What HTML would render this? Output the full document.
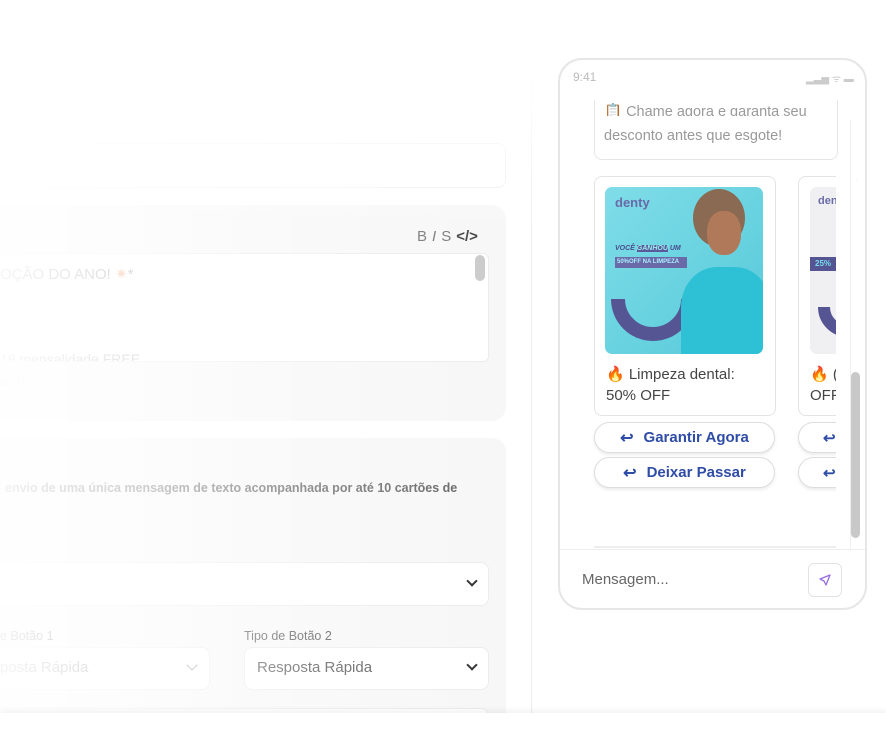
<!DOCTYPE html>
<html><head><meta charset="utf-8"><style>
*{box-sizing:border-box;margin:0;padding:0}
html,body{width:886px;height:729px;overflow:hidden}
body{background:#fff;font-family:"Liberation Sans",sans-serif;position:relative}
.a{position:absolute}
.card{background:#f7f7f7;border-radius:14px}
.box{background:#fff;border:1px solid #ececec;border-radius:8px}
.chev{position:absolute;width:8px;height:8px;border-right:2px solid #333;border-bottom:2px solid #333;transform:rotate(45deg)}
.btn{position:absolute;left:594px;width:181px;height:31px;border:1px solid #ddd;border-radius:16px;background:#fff;box-shadow:0 2px 3px rgba(0,0,0,.08);color:#2f4da6;font-weight:bold;font-size:15px;display:flex;align-items:center;justify-content:center;gap:10px}
</style></head><body>
<div class="a box" style="left:-20px;top:143px;width:526px;height:45px;border-color:#f0f0f0"></div>
<div class="a card" style="left:-20px;top:205px;width:526px;height:216px"></div>
<div class="a" style="left:417px;top:228px;font-size:15px;color:#777;letter-spacing:5px">B<i>I</i>S<b style="color:#444;letter-spacing:0">&lt;/&gt;</b></div>
<div class="a box" style="left:-20px;top:253px;width:509px;height:109px;border-radius:6px"></div>
<div class="a" style="left:475px;top:255px;width:10px;height:26px;background:#ccc;border-radius:5px"></div>
<div class="a" style="left:0;top:265px;font-size:15px;color:#888">OÇÃO DO ANO! <span style="color:#f2a070">✷</span>*</div>
<div class="a" style="left:0;top:352px;font-size:14px;line-height:14px;color:#aaa;height:9px;overflow:hidden">18 mensalidade FREE</div>
<div class="a" style="left:0;top:372px;font-size:12px;color:#ccc">is ⓘ</div>
<div class="a card" style="left:-20px;top:438px;width:526px;height:290px"></div>
<div class="a" style="left:5px;top:481px;font-size:12.5px;color:#666;font-weight:bold">envio de uma única mensagem de texto acompanhada por até 10 cartões de</div>
<div class="a box" style="left:-20px;top:562px;width:509px;height:44px"></div>
<div class="chev" style="left:468px;top:577px"></div>
<div class="a" style="left:0;top:629px;font-size:12.5px;color:#555">e Botão 1</div>
<div class="a" style="left:244px;top:629px;font-size:12.5px;color:#555">Tipo de Botão 2</div>
<div class="a box" style="left:-20px;top:647px;width:230px;height:43px"></div>
<div class="a" style="left:0;top:659px;font-size:15px;color:#888">posta Rápida</div>
<div class="chev" style="left:188px;top:661px;border-color:#999;border-width:1.5px"></div>
<div class="a box" style="left:244px;top:647px;width:245px;height:43px"></div>
<div class="a" style="left:257px;top:659px;font-size:15px;color:#555">Resposta Rápida</div>
<div class="chev" style="left:468px;top:661px"></div>
<div class="a box" style="left:-20px;top:708px;width:509px;height:40px"></div>
<div class="a" style="left:531px;top:60px;width:1px;height:655px;background:#eee"></div>
<div class="a" style="left:0;top:0;width:540px;height:729px;background:linear-gradient(90deg,rgba(255,255,255,.92) 0%,rgba(255,255,255,.7) 25%,rgba(255,255,255,.3) 55%,rgba(255,255,255,0) 90%)"></div>
<div class="a" style="left:0;top:0;width:540px;height:230px;background:linear-gradient(180deg,rgba(255,255,255,1) 30%,rgba(255,255,255,0) 100%)"></div>
<div class="a" style="left:0;top:713px;width:886px;height:16px;background:#fff;box-shadow:0 -3px 6px rgba(0,0,0,.05)"></div>
<div class="a" style="left:558px;top:58px;width:309px;height:552px;border:2px solid #e6e6e6;border-radius:24px;background:#fff;overflow:hidden">
 <div class="a" style="left:13px;top:10px;font-size:12px;color:#bbb">9:41</div>
 <div class="a" style="left:246px;top:11px;font-size:10px;color:#ccc">▂▃▅ ᯤ ▬</div>
 <div class="a" style="left:34px;top:40px;width:244px;height:60px;border:1px solid #e6e6e6;border-top:none;border-radius:0 0 8px 8px"></div>
 <div class="a" style="left:44px;top:48px;font-size:14.5px;color:#9a9a9a;line-height:20px;height:14px;overflow:hidden;margin-top:-6px">📋 Chame agora e garanta seu</div>
 <div class="a" style="left:44px;top:68px;font-size:14.5px;color:#999">desconto antes que esgote!</div>
 <div class="a" style="left:34px;top:116px;width:182px;height:240px;border:1px solid #e3e3e3;border-radius:8px"></div>
 <div class="a" style="left:45px;top:127px;width:158px;height:167px;border-radius:7px;overflow:hidden;background:linear-gradient(135deg,#7fdde8,#56c9d9)">
  <div class="a" style="left:10px;top:8px;font-size:13px;color:#6a6aa8;font-weight:bold">denty</div>
  <div class="a" style="left:10px;top:58px;font-size:7px;color:#4b4b8c;font-weight:bold;font-style:italic">VOCÊ <span style="background:#5b5b9c;color:#9ee">GANHOU</span> UM</div>
  <div class="a" style="left:10px;top:70px;width:72px;height:11px;background:#6a6aa8;font-size:6px;color:#aef;font-weight:bold;padding:2px">50%OFF NA LIMPEZA</div>
  <div class="a" style="left:6px;top:70px;width:84px;height:84px;border:14px solid #565594;border-radius:50%;clip-path:inset(50% 0 0 0)"></div>
  <div class="a" style="left:88px;top:2px;width:52px;height:58px;border-radius:50%;background:#8a6a52"></div>
  <div class="a" style="left:102px;top:24px;width:34px;height:44px;border-radius:45%;background:#b07a5a"></div>
  <div class="a" style="left:76px;top:80px;width:90px;height:100px;border-radius:40% 40% 0 0;background:#2ec0d4"></div>
 </div>
 <div class="a" style="left:46px;top:304px;font-size:15px;color:#444;line-height:21px">🔥 Limpeza dental:<br>50% OFF</div>
 <div class="a" style="left:238px;top:116px;width:60px;height:240px;border:1px solid #e3e3e3;border-radius:8px;border-right:none"></div>
 <div class="a" style="left:250px;top:127px;width:40px;height:167px;border-radius:7px 0 0 7px;background:#f0f0f3;overflow:hidden">
  <div class="a" style="left:8px;top:8px;font-size:11px;color:#6a6aa8;font-weight:bold">den</div>
  <div class="a" style="left:0;top:70px;width:40px;height:14px;background:#565594;color:#7de;font-size:8px;font-weight:bold;padding:2px 5px">25%</div>
  <div class="a" style="left:8px;top:90px;width:60px;height:60px;border:12px solid #565594;border-radius:50%;clip-path:inset(50% 0 0 0)"></div>
 </div>
 <div class="a" style="left:250px;top:304px;font-size:15px;color:#444;line-height:21px">🔥 (<br>OFF</div>
 <div class="a" style="left:276px;top:100px;width:20px;height:390px;background:#fff"></div>
 <div class="a" style="left:290px;top:60px;width:1px;height:430px;background:#eee"></div>
 <div class="a" style="left:291px;top:312px;width:9px;height:166px;background:#c8c8c8;border-radius:5px"></div>
 <div class="a" style="left:34px;top:486px;width:242px;height:2px;background:#eee"></div>
 <div class="a" style="left:0;top:489px;width:309px;height:1px;background:#eee"></div>
 <div class="a" style="left:22px;top:511px;font-size:15px;color:#666">Mensagem...</div>
 <div class="a" style="left:248px;top:503px;width:34px;height:34px;border:1px solid #e3e3e3;border-radius:6px"></div>
 <svg class="a" style="left:258px;top:513px" width="14" height="14" viewBox="0 0 14 14"><path d="M12 2L2 6l4 2 2 4z" fill="none" stroke="#9a6ee0" stroke-width="1.3" stroke-linejoin="round"/></svg>
</div>
<div class="btn" style="top:422px"><span style="font-size:16px">↩</span>Garantir Agora</div>
<div class="btn" style="top:457px"><span style="font-size:16px">↩</span>Deixar Passar</div>
<div class="btn" style="top:422px;left:798px;width:60px;justify-content:flex-start;padding-left:24px;clip-path:inset(-4px 22px -4px -4px)">↩</div>
<div class="btn" style="top:457px;left:798px;width:60px;justify-content:flex-start;padding-left:24px;clip-path:inset(-4px 22px -4px -4px)">↩</div>
</body></html>
